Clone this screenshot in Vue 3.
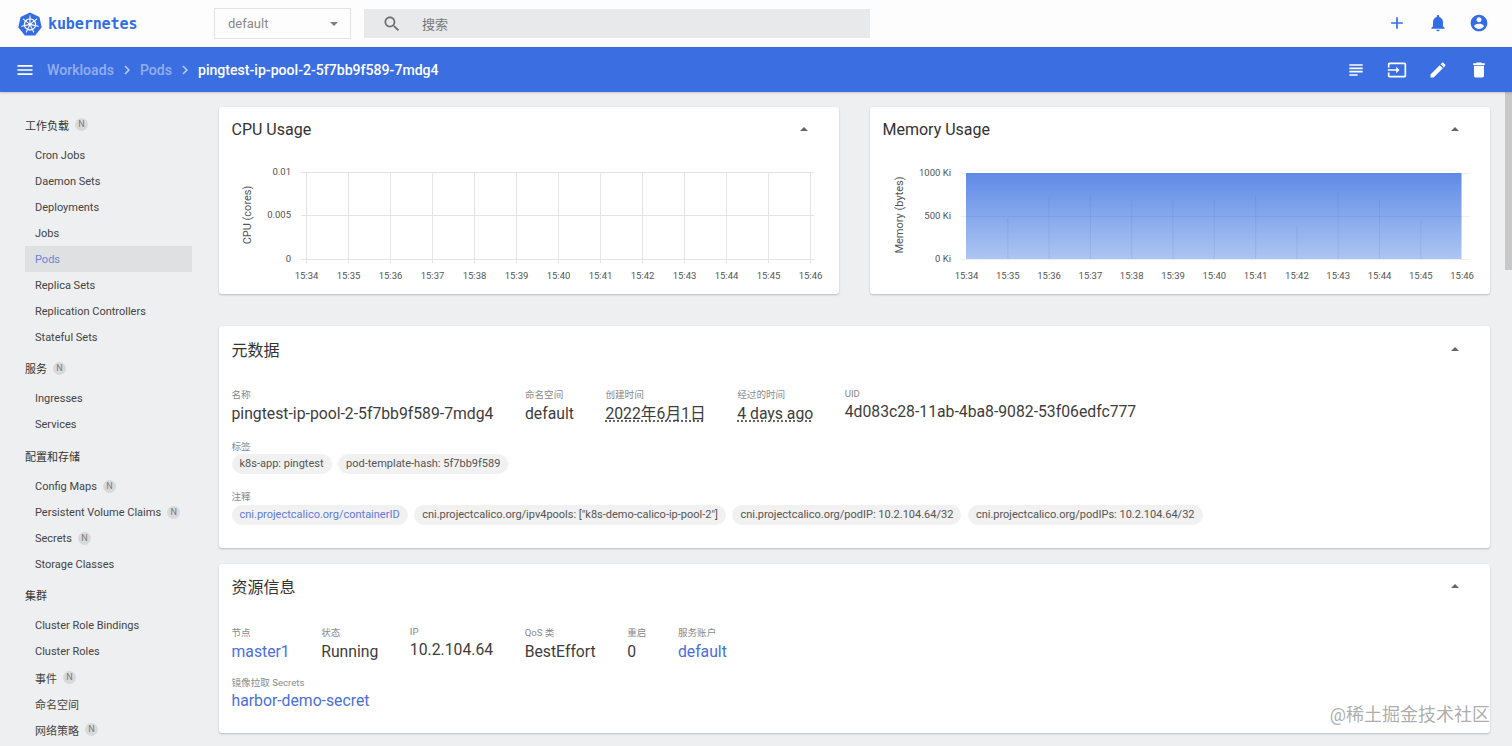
<script setup>
const sections = [
  { title: '工作负载', badge: true, items: [['Cron Jobs'], ['Daemon Sets'], ['Deployments'], ['Jobs'], ['Pods', false, true], ['Replica Sets'], ['Replication Controllers'], ['Stateful Sets']] },
  { title: '服务', badge: true, items: [['Ingresses'], ['Services']] },
  { title: '配置和存储', items: [['Config Maps', true], ['Persistent Volume Claims', true], ['Secrets', true], ['Storage Classes']] },
  { title: '集群', items: [['Cluster Role Bindings'], ['Cluster Roles'], ['事件', true], ['命名空间'], ['网络策略', true]] },
]
const times = ['15:34','15:35','15:36','15:37','15:38','15:39','15:40','15:41','15:42','15:43','15:44','15:45','15:46']
const cpuX = times.map((t, i) => ({ t, x: 87.5 + i * 42 }))
const memTops = [0, 67, 44, 44, 49, 49, 49, 44, 74, 41, 49, 69, 0]
const memX = times.map((t, i) => ({ t, x: 96.5 + i * 41.3, top: memTops[i] }))
const chips = ['k8s-app: pingtest', 'pod-template-hash: 5f7bb9f589']
const notes = ['cni.projectcalico.org/ipv4pools: ["k8s-demo-calico-ip-pool-2"]', 'cni.projectcalico.org/podIP: 10.2.104.64/32', 'cni.projectcalico.org/podIPs: 10.2.104.64/32']
const icons = {
  search: 'M15.5 14h-.79l-.28-.27C15.41 12.59 16 11.11 16 9.5 16 5.91 13.09 3 9.5 3S3 5.91 3 9.5 5.91 16 9.5 16c1.61 0 3.09-.59 4.23-1.57l.27.28v.79l5 4.99L20.49 19l-4.99-5zm-6 0C7.01 14 5 11.99 5 9.5S7.01 5 9.5 5 14 7.01 14 9.5 11.99 14 9.5 14z',
  add: 'M19 13h-6v6h-2v-6H5v-2h6V5h2v6h6v2z',
  bell: 'M12 22c1.1 0 2-.9 2-2h-4c0 1.1.89 2 2 2zm6-6v-5c0-3.07-1.64-5.64-4.5-6.32V4c0-.83-.67-1.5-1.5-1.5s-1.5.67-1.5 1.5v.68C7.63 5.36 6 7.92 6 11v5l-2 2v1h16v-1l-2-2z',
  account: 'M12 2C6.48 2 2 6.48 2 12s4.48 10 10 10 10-4.48 10-10S17.52 2 12 2zm0 3c1.66 0 3 1.34 3 3s-1.34 3-3 3-3-1.34-3-3 1.34-3 3-3zm0 14.2c-2.5 0-4.71-1.28-6-3.22.03-1.99 4-3.08 6-3.08 1.99 0 5.97 1.09 6 3.08-1.29 1.94-3.5 3.22-6 3.22z',
  menu: 'M3 18h18v-2H3v2zm0-5h18v-2H3v2zm0-7v2h18V6H3z',
  subject: 'M14 17H4v2h10v-2zm6-8H4v2h16V9zM4 15h16v-2H4v2zM4 5v2h16V5H4z',
  input: 'M21 3.01H3c-1.1 0-2 .9-2 2V9h2V4.99h18v14.03H3V15H1v4.01c0 1.1.9 1.98 2 1.98h18c1.1 0 2-.88 2-1.98v-14c0-1.11-.9-2-2-2zM11 16l4-4-4-4v3H1v2h10v3z',
  edit: 'M3 17.25V21h3.75L17.81 9.94l-3.75-3.75L3 17.25zM20.71 7.04c.39-.39.39-1.02 0-1.41l-2.34-2.34c-.39-.39-1.02-.39-1.41 0l-1.83 1.83 3.75 3.75 1.83-1.83z',
  trash: 'M6 19c0 1.1.9 2 2 2h8c1.1 0 2-.9 2-2V7H6v12zM19 4h-3.5l-1-1h-5l-1 1H5v2h14V4z',
  chevron: 'M10 6L8.59 7.41 13.17 12l-4.58 4.59L10 18l6-6z',
}
const spokes = [0, 51.4, 102.9, 154.3, 205.7, 257.1, 308.6]
</script>

<template>
  <div class="app">
    <header class="top">
      <div class="brand">
        <svg class="logo" viewBox="0 0 24 24" width="24" height="24">
          <path d="M12 .6l9.4 4.5 2.3 10.1-6.5 8.2H6.8L.3 15.2 2.6 5.1z" fill="#326de6" />
          <circle cx="12" cy="12.4" r="5.6" fill="none" stroke="#fff" stroke-width="1.3" />
          <g stroke="#fff" stroke-width="1.1" stroke-linecap="round">
            <line v-for="a in spokes" :key="a" x1="12" y1="12.4" x2="12" y2="3.9" :transform="`rotate(${a} 12 12.4)`" />
          </g>
          <circle cx="12" cy="12.4" r="1.3" fill="#fff" />
        </svg>
        <span class="brand-name">kubernetes</span>
      </div>
      <div class="ns">
        <span>default</span>
        <i class="caret-down"></i>
      </div>
      <div class="search">
        <svg class="search-icon" viewBox="0 0 24 24" width="20" height="20"><path :d="icons.search" /></svg>
        <span>搜索</span>
      </div>
      <div class="actions blue-icons">
        <span class="icon-btn"><svg viewBox="0 0 24 24" width="20" height="20"><path :d="icons.add" /></svg></span>
        <span class="icon-btn"><svg viewBox="0 0 24 24" width="20" height="20"><path :d="icons.bell" /></svg></span>
        <span class="icon-btn"><svg viewBox="0 0 24 24" width="20" height="20"><path :d="icons.account" /></svg></span>
      </div>
    </header>

    <div class="bar">
      <svg class="menu" viewBox="0 0 24 24" width="20" height="20"><path :d="icons.menu" /></svg>
      <nav class="crumbs">
        <span class="dim">Workloads</span>
        <svg viewBox="0 0 24 24" width="18" height="18"><path :d="icons.chevron" /></svg>
        <span class="dim">Pods</span>
        <svg viewBox="0 0 24 24" width="18" height="18"><path :d="icons.chevron" /></svg>
        <span>pingtest-ip-pool-2-5f7bb9f589-7mdg4</span>
      </nav>
      <div class="actions white-icons">
        <span class="icon-btn"><svg viewBox="0 0 24 24" width="20" height="20"><path :d="icons.subject" /></svg></span>
        <span class="icon-btn"><svg viewBox="0 0 24 24" width="20" height="20"><path :d="icons.input" /></svg></span>
        <span class="icon-btn"><svg viewBox="0 0 24 24" width="20" height="20"><path :d="icons.edit" /></svg></span>
        <span class="icon-btn"><svg viewBox="0 0 24 24" width="20" height="20"><path :d="icons.trash" /></svg></span>
      </div>
    </div>

    <div class="body">
      <aside class="side">
        <template v-for="s in sections" :key="s.title">
          <div class="sec">{{ s.title }}<b v-if="s.badge" class="n">N</b></div>
          <div v-for="it in s.items" :key="it[0]" class="item" :class="{ on: it[2] }">{{ it[0] }}<b v-if="it[1]" class="n">N</b></div>
        </template>
      </aside>

      <main class="main">
        <div class="charts">
          <section class="card">
            <div class="head"><h2>CPU Usage</h2><i class="caret-up"></i></div>
            <svg class="chart" width="620" height="143" viewBox="0 0 620 143">
              <g stroke="#e4e4e4" stroke-width="1">
                <line x1="82" x2="595" y1="21.5" y2="21.5" />
                <line x1="82" x2="595" y1="64.5" y2="64.5" />
                <line x1="82" x2="595" y1="108.5" y2="108.5" />
                <line v-for="c in cpuX" :key="c.t" :x1="c.x" :x2="c.x" y1="21" y2="112" />
              </g>
              <g class="tick" text-anchor="end">
                <text x="72" y="24">0.01</text>
                <text x="72" y="67">0.005</text>
                <text x="72" y="111">0</text>
              </g>
              <g class="tick" text-anchor="middle">
                <text v-for="c in cpuX" :key="c.t" :x="c.x" y="128">{{ c.t }}</text>
              </g>
              <text class="axis" text-anchor="middle" transform="translate(32 64) rotate(-90)">CPU (cores)</text>
            </svg>
          </section>
          <section class="card">
            <div class="head"><h2>Memory Usage</h2><i class="caret-up"></i></div>
            <svg class="chart" width="620" height="143" viewBox="0 0 620 143">
              <defs>
                <linearGradient id="mem" x1="0" y1="0" x2="0" y2="1">
                  <stop offset="0" stop-color="#5f8ae6" />
                  <stop offset="1" stop-color="#adc5f2" />
                </linearGradient>
              </defs>
              <g stroke="#eceef2" stroke-width="1">
                <line x1="91" x2="600" y1="22.5" y2="22.5" />
                <line x1="91" x2="600" y1="65.5" y2="65.5" />
                <line x1="91" x2="600" y1="108.5" y2="108.5" />
              </g>
              <rect x="96" y="22" width="495.5" height="86" fill="url(#mem)" />
              <line x1="96" x2="591.5" y1="65.5" y2="65.5" stroke="#4a6fc0" stroke-opacity=".12" />
              <g stroke="#3f62b4" stroke-opacity=".13">
                <line v-for="c in memX.slice(1, 12)" :key="c.t" :x1="c.x" :x2="c.x" :y1="c.top" y2="108" />
              </g>
              <g class="tick" text-anchor="end">
                <text x="81" y="25">1000 Ki</text>
                <text x="81" y="68">500 Ki</text>
                <text x="81" y="111">0 Ki</text>
              </g>
              <g class="tick" text-anchor="middle">
                <text v-for="c in memX" :key="c.t" :x="c.x" y="128">{{ c.t }}</text>
              </g>
              <text class="axis" text-anchor="middle" transform="translate(33 64) rotate(-90)">Memory (bytes)</text>
            </svg>
          </section>
        </div>

        <section class="card meta">
          <div class="head tall"><h2>元数据</h2><i class="caret-up"></i></div>
          <div class="content">
            <div class="row">
              <div class="field"><label>名称</label><p>pingtest-ip-pool-2-5f7bb9f589-7mdg4</p></div>
              <div class="field"><label>命名空间</label><p>default</p></div>
              <div class="field"><label>创建时间</label><p class="dotted">2022年6月1日</p></div>
              <div class="field"><label>经过的时间</label><p class="dotted">4 days ago</p></div>
              <div class="field raised"><label>UID</label><p>4d083c28-11ab-4ba8-9082-53f06edfc777</p></div>
            </div>
            <div class="chip-block first">
              <label>标签</label>
              <div class="chips"><span v-for="c in chips" :key="c" class="chip">{{ c }}</span></div>
            </div>
            <div class="chip-block">
              <label>注释</label>
              <div class="chips">
                <span class="chip link">cni.projectcalico.org/containerID</span>
                <span v-for="c in notes" :key="c" class="chip">{{ c }}</span>
              </div>
            </div>
          </div>
        </section>

        <section class="card res">
          <div class="head"><h2>资源信息</h2><i class="caret-up"></i></div>
          <div class="content">
            <div class="row">
              <div class="field"><label>节点</label><p class="link">master1</p></div>
              <div class="field"><label>状态</label><p>Running</p></div>
              <div class="field raised"><label>IP</label><p>10.2.104.64</p></div>
              <div class="field"><label>QoS 类</label><p>BestEffort</p></div>
              <div class="field"><label>重启</label><p>0</p></div>
              <div class="field"><label>服务账户</label><p class="link">default</p></div>
            </div>
            <div class="field secrets"><label>镜像拉取 Secrets</label><p class="link">harbor-demo-secret</p></div>
          </div>
        </section>
      </main>

      <div class="scroll"><div class="thumb"></div></div>
    </div>
    <div class="mark">@稀土掘金技术社区</div>
  </div>
</template>

<style>
html, body { margin: 0; height: 100%; overflow: hidden; background: #eeeff1; }
</style>

<style scoped>
.app {
  position: relative;
  width: 1512px;
  height: 746px;
  overflow: hidden;
  background: #eeeff1;
  color: #333;
  font-family: Roboto, "Noto Sans CJK SC", sans-serif;
}
.top {
  height: 47px;
  display: flex;
  align-items: center;
  background: #fdfdfd;
  box-sizing: border-box;
}
.brand { width: 214px; display: flex; align-items: center; padding-left: 18px; box-sizing: border-box; gap: 6px; }
.logo { flex: none; }
.brand-name {
  color: #326de6;
  font: 700 15px "DejaVu Sans Mono", monospace;
  letter-spacing: -.1px;
  padding-top: 1px;
}
.ns {
  width: 137px;
  height: 31px;
  box-sizing: border-box;
  border: 1px solid #e2e3e5;
  background: #fdfdfd;
  display: flex;
  align-items: center;
  justify-content: space-between;
  padding: 0 12px 0 13px;
  font-size: 13px;
  color: #8a8a8a;
}
.caret-down { width: 0; height: 0; border: 4px solid transparent; border-top: 4px solid #7d7d7d; border-bottom: 0; }
.search {
  width: 506px;
  height: 29px;
  margin-left: 13px;
  background: #e8e9eb;
  display: flex;
  align-items: center;
  color: #777;
  font-size: 13px;
}
.search-icon { margin-left: 18px; margin-right: 20px; fill: #6e6e6e; }
.actions { margin-left: auto; display: flex; padding-right: 13px; }
.top .actions { margin-top: -1px; }
.icon-btn { width: 41px; height: 41px; display: flex; align-items: center; justify-content: center; }
.blue-icons svg { fill: #326de6; }
.white-icons svg { fill: #fff; }
.bar {
  height: 45px;
  display: flex;
  align-items: center;
  background: #3b6fe1;
  box-shadow: 0 1px 2px rgba(0, 0, 0, .18);
  color: #fff;
  position: relative;
  font-size: 14.1px;
  font-weight: 500;
}
.menu { margin-left: 15px; fill: #fff; }
.crumbs { margin-left: 12px; display: flex; align-items: center; gap: 4px; }
.crumbs svg { fill: rgba(255, 255, 255, .65); }
.dim { color: rgba(255, 255, 255, .45); }
.body { display: flex; height: 654px; }
.side { width: 204px; flex: none; padding-top: 14.5px; box-sizing: border-box; }
.sec {
  height: 26px;
  margin: 5px 0 4.6px;
  padding-left: 25px;
  display: flex;
  align-items: center;
  font-size: 11px;
  color: #333;
}
.item {
  height: 26px;
  margin: 0 12px 0 25px;
  padding-left: 10px;
  display: flex;
  align-items: center;
  font-size: 11px;
  color: #444;
}
.item.on { background: #dfe0e2; color: #6a85d8; }
.n {
  width: 13px;
  height: 13px;
  margin-left: 6px;
  border-radius: 50%;
  background: #d8d9db;
  color: #7c7c7c;
  font-size: 9px;
  font-weight: 400;
  line-height: 13px;
  text-align: center;
}
.main { flex: none; width: 1271px; padding: 15px 15px 0; display: flex; flex-direction: column; }
.charts { display: grid; grid-template-columns: 620px 620px; column-gap: 31px; margin-bottom: 32px; }
.card { background: #fff; border-radius: 3px; box-shadow: 0 1px 2px rgba(0, 0, 0, .22); }
.head { height: 44px; padding: 0 31px 0 12.5px; display: flex; align-items: center; justify-content: space-between; }
.head.tall { height: 46px; }
h2 { margin: 0; font-size: 16px; font-weight: 400; color: #333; }
.caret-up { width: 0; height: 0; border: 4px solid transparent; border-bottom: 4px solid #666; border-top: 0; }
.chart { display: block; }
.tick { font-size: 9.5px; fill: #555; }
.axis { font-size: 11px; fill: #555; }
.meta { height: 222px; margin-bottom: 16px; flex: none; box-sizing: border-box; }
.res { height: 169px; flex: none; box-sizing: border-box; }
.content { padding: 17px 12.5px 0; }
.res .content { padding-top: 19px; }
.row { display: flex; gap: 31.5px; align-items: flex-start; }
.field.raised { margin-top: -1px; }
label { display: block; height: 12px; font-size: 9.6px; line-height: 12px; color: #8a8a8a; margin-bottom: 3px; }
p { margin: 0; font-size: 15.75px; line-height: 20px; color: #3d3d3d; }
.raised p { line-height: 18px; }
.dotted { text-decoration: underline dotted #333; text-underline-offset: 2px; }
p.link, .chip.link { color: #4a6fd8; }
.chip-block { margin-top: 17px; }
.chip-block label { margin-bottom: 2px; }
.chip-block.first label { margin-bottom: 1px; }
.chips { display: flex; gap: 6.5px; }
.chip {
  height: 20px;
  padding: 0 8px;
  border-radius: 10px;
  background: #f1f1f1;
  font-size: 11px;
  line-height: 20px;
  color: #555;
  white-space: nowrap;
}
.chip.link { color: #5f7bdc; }
.secrets { margin-top: 15px; }
.secrets label { margin-bottom: 2px; }
.scroll { margin-left: auto; width: 7px; background: #eeeff1; }
.thumb { height: 178px; background: #c8c8c8; }
.mark {
  position: absolute;
  right: 22px;
  bottom: 19px;
  font-size: 18px;
  line-height: 24px;
  color: rgba(120, 120, 120, .62);
}
</style>
